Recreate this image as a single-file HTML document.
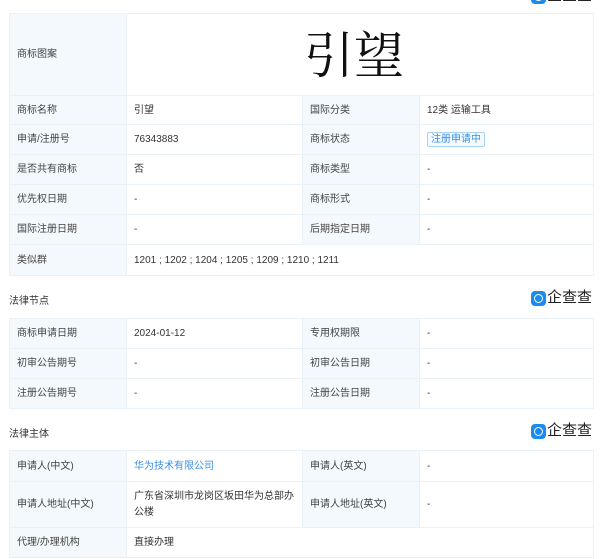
<!DOCTYPE html>
<html><head><meta charset="utf-8"><style>
*{margin:0;padding:0;box-sizing:border-box}
body{width:600px;height:559px;background:#fff;position:relative;overflow:hidden;font-family:"Liberation Sans","Noto Sans CJK SC",sans-serif;font-size:10px;color:#333}
table{position:absolute;left:9px;width:584px;border-collapse:collapse;table-layout:fixed}
td{border:1px solid #e9f2f8;padding:0 0 0 7px;vertical-align:middle;line-height:15px}
td.l{background:#f3f9fd;color:#444}
.sec{position:absolute;left:9px;font-size:10px;color:#333}
.logo{position:absolute;left:531px;width:69px;height:17px;white-space:nowrap}
.logo .ic{position:absolute;left:0;top:1px;width:15px;height:15px;border-radius:4px;background:#1a8cf0}
.logo .ic:before{content:"";position:absolute;left:3px;top:3px;width:7px;height:7px;border:1.5px solid #fff;border-radius:50%}
.logo .t{position:absolute;left:16px;top:-3px;font-size:15px;line-height:20px;color:#222;white-space:nowrap;font-family:"Noto Sans CJK SC",sans-serif}
.tag{display:inline-block;border:1px solid #a9d3f7;color:#3a8ee6;padding:0 3px;line-height:13px;border-radius:2px;background:#f5faff}
a{color:#3a8ee6;text-decoration:none}
</style></head><body>
<div class="logo" style="top:-12px"><div class="ic"></div><div class="t">企查查</div></div>
<table style="top:13px">
<colgroup><col style="width:117px"><col style="width:176px"><col style="width:117px"><col style="width:174px"></colgroup>
<tr style="height:82px"><td class="l">商标图案</td><td colspan="3" style="text-align:center;padding:0 0 0 0"><span style="font-family:'Noto Serif CJK SC',serif;font-size:50px;color:#111;position:relative;left:-6px;top:-2px;line-height:50px">引望</span></td></tr>
<tr style="height:29px"><td class="l">商标名称</td><td>引望</td><td class="l">国际分类</td><td>12类 运输工具</td></tr>
<tr style="height:30px"><td class="l">申请/注册号</td><td>76343883</td><td class="l">商标状态</td><td><span class="tag">注册申请中</span></td></tr>
<tr style="height:30px"><td class="l">是否共有商标</td><td>否</td><td class="l">商标类型</td><td>-</td></tr>
<tr style="height:30px"><td class="l">优先权日期</td><td>-</td><td class="l">商标形式</td><td>-</td></tr>
<tr style="height:30px"><td class="l">国际注册日期</td><td>-</td><td class="l">后期指定日期</td><td>-</td></tr>
<tr style="height:31px"><td class="l">类似群</td><td colspan="3">1201 ; 1202 ; 1204 ; 1205 ; 1209 ; 1210 ; 1211</td></tr>
</table>
<div class="sec" style="top:292px">法律节点</div>
<div class="logo" style="top:290px"><div class="ic"></div><div class="t">企查查</div></div>
<table style="top:318px">
<colgroup><col style="width:117px"><col style="width:176px"><col style="width:117px"><col style="width:174px"></colgroup>
<tr style="height:30px"><td class="l">商标申请日期</td><td>2024-01-12</td><td class="l">专用权期限</td><td>-</td></tr>
<tr style="height:30px"><td class="l">初审公告期号</td><td>-</td><td class="l">初审公告日期</td><td>-</td></tr>
<tr style="height:30px"><td class="l">注册公告期号</td><td>-</td><td class="l">注册公告日期</td><td>-</td></tr>
</table>
<div class="sec" style="top:425px">法律主体</div>
<div class="logo" style="top:423px"><div class="ic"></div><div class="t">企查查</div></div>
<table style="top:450px">
<colgroup><col style="width:117px"><col style="width:176px"><col style="width:117px"><col style="width:174px"></colgroup>
<tr style="height:31px"><td class="l">申请人(中文)</td><td><a>华为技术有限公司</a></td><td class="l">申请人(英文)</td><td>-</td></tr>
<tr style="height:46px"><td class="l">申请人地址(中文)</td><td style="line-height:16px;padding-right:4px">广东省深圳市龙岗区坂田华为总部办公楼</td><td class="l">申请人地址(英文)</td><td>-</td></tr>
<tr style="height:30px"><td class="l">代理/办理机构</td><td colspan="3">直接办理</td></tr>
</table>
</body></html>
